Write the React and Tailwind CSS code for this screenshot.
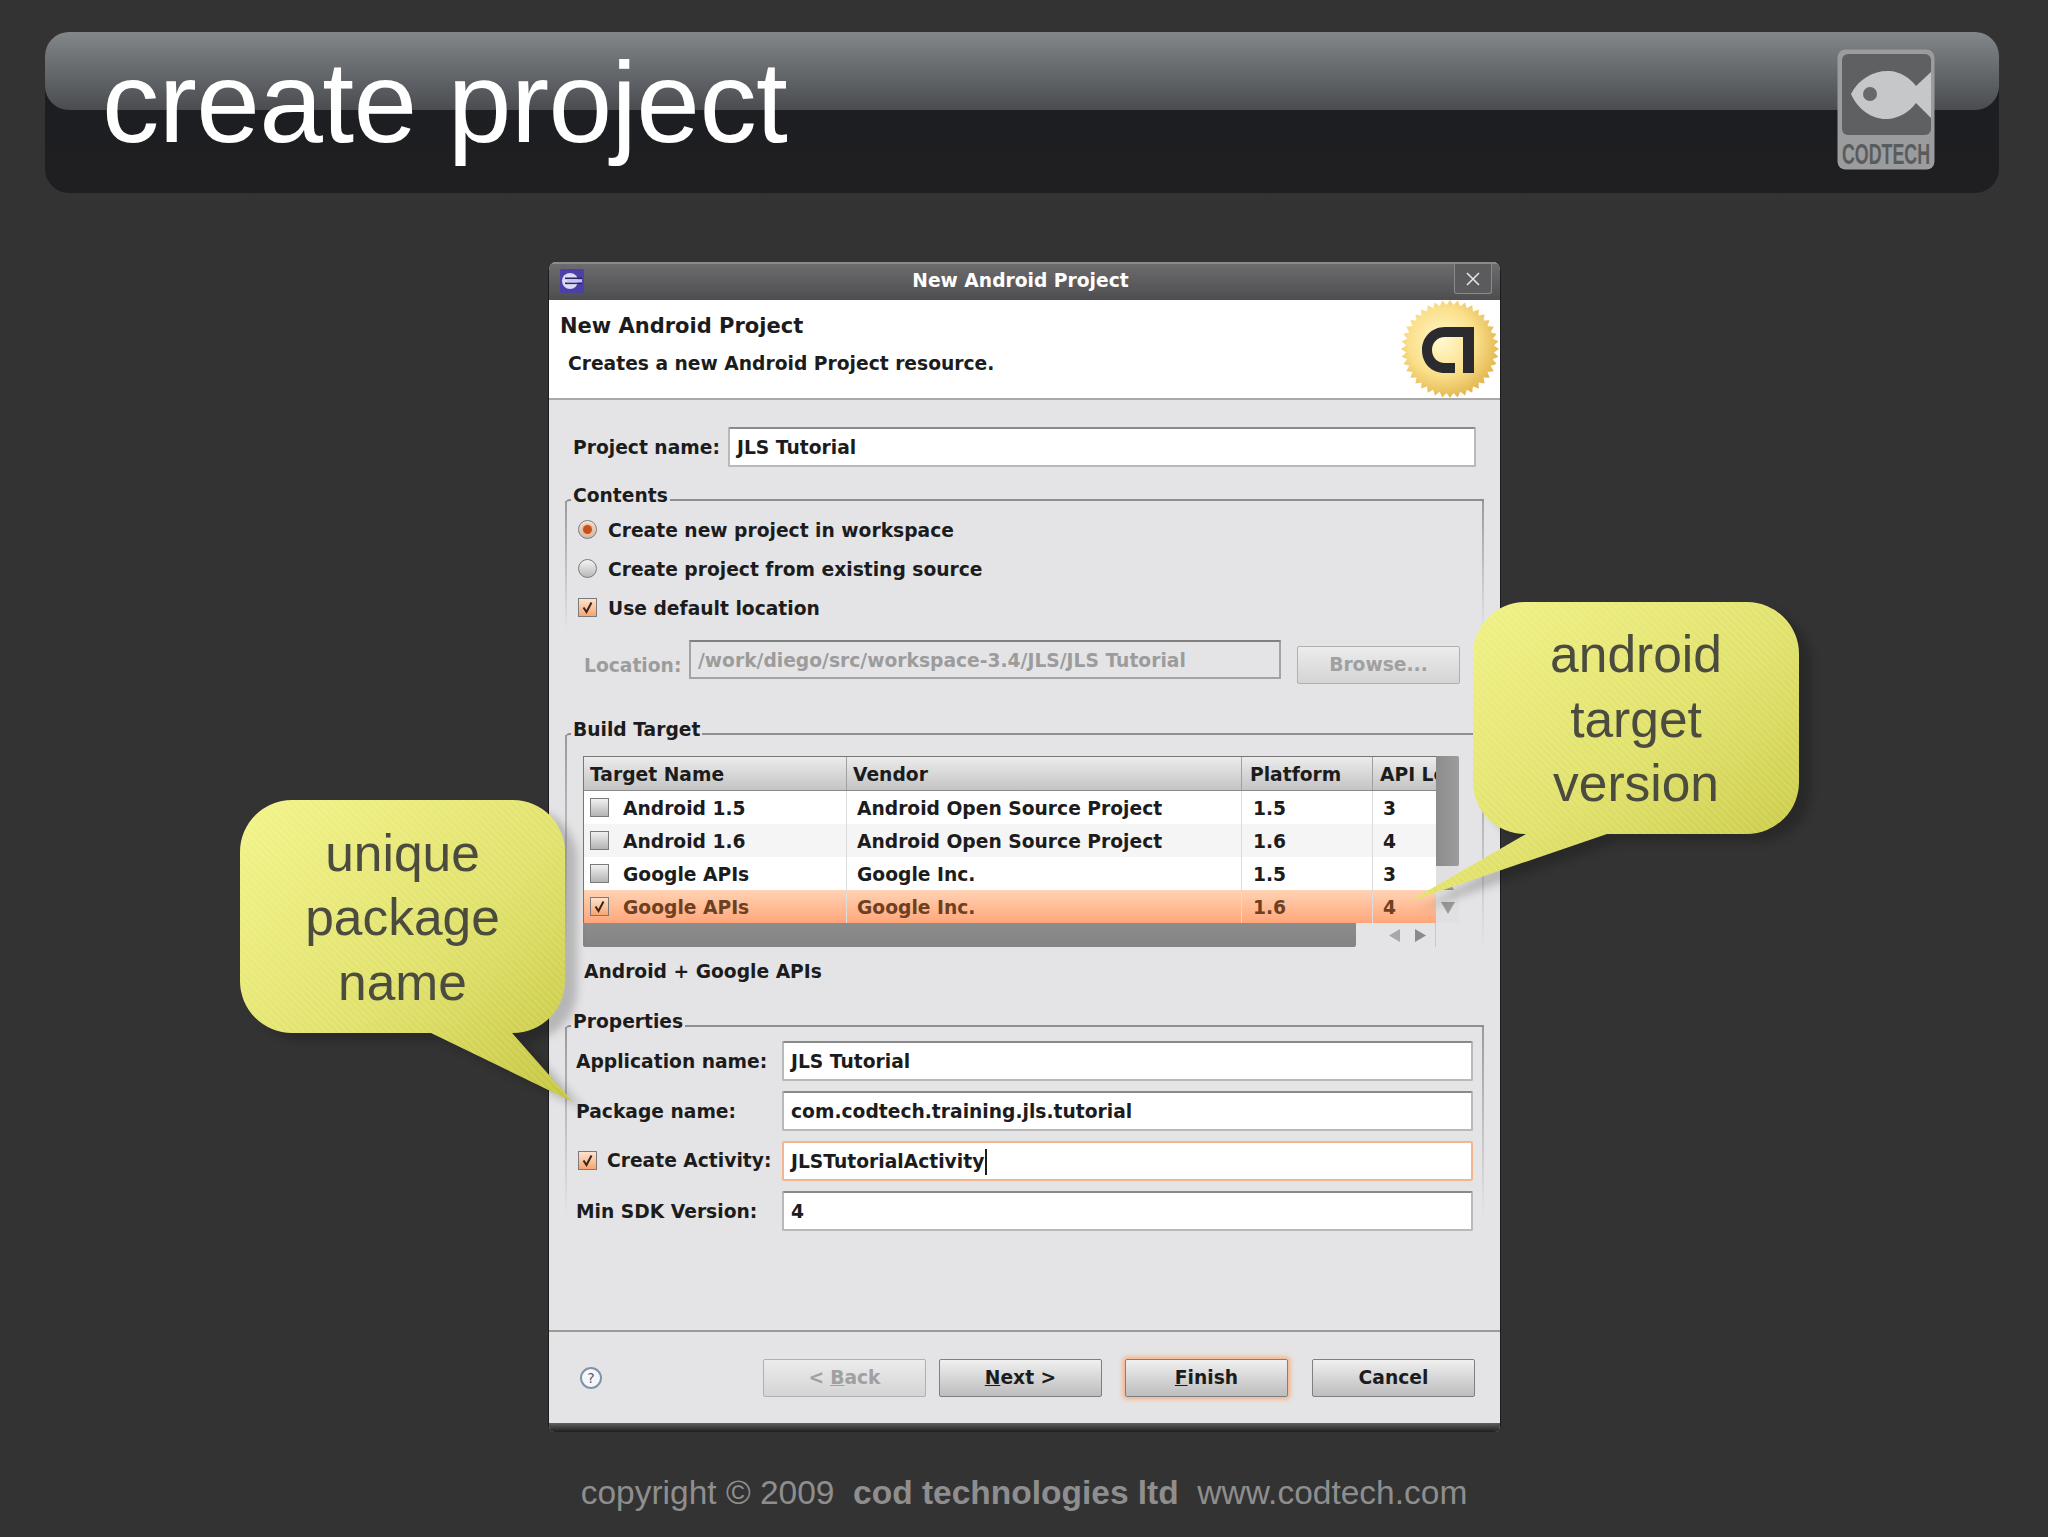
import React from 'react';

const targets = [
  { name: 'Android 1.5', vendor: 'Android Open Source Project', platform: '1.5', api: '3' },
  { name: 'Android 1.6', vendor: 'Android Open Source Project', platform: '1.6', api: '4', alt: true },
  { name: 'Google APIs', vendor: 'Google Inc.', platform: '1.5', api: '3' },
  { name: 'Google APIs', vendor: 'Google Inc.', platform: '1.6', api: '4', selected: true },
];

const sealPoints = Array.from({ length: 80 }, (_, i) => {
  const r = i % 2 === 0 ? 49 : 44;
  const a = (i / 80) * Math.PI * 2;
  return `${(49 + r * Math.cos(a)).toFixed(1)},${(49 + r * Math.sin(a)).toFixed(1)}`;
}).join(' ');

const Checkbox = ({ checked }) => (
  <span className={`flex h-[19px] w-[19px] shrink-0 items-center justify-center border border-[#7a7a7a] ${checked ? 'bg-gradient-to-b from-[#fde3cf] to-[#f6a56f]' : 'bg-gradient-to-b from-[#f1f1f1] to-[#b4b4b4]'}`}>
    {checked && (
      <svg width="13" height="13" viewBox="0 0 13 13" fill="none">
        <path d="M2.5 6.5 L5.5 11 L10.5 1.5" stroke="#3a2415" strokeWidth="2" />
      </svg>
    )}
  </span>
);

const Radio = ({ checked }) => (
  <span className="flex h-[19px] w-[19px] shrink-0 items-center justify-center rounded-full border border-[#7a7a7a] bg-gradient-to-b from-[#f4f4f4] to-[#b9b9b9]">
    {checked && <span className="h-[9px] w-[9px] rounded-full bg-[#c4521c] shadow-[0_0_3px_2px_#f8b98c]" />}
  </span>
);

const Field = ({ value, className = '', focused, disabled }) => (
  <div className={`flex items-center border-2 pl-[7px] ${focused ? 'rounded-[2px] border-[#f3b58e] bg-white pt-[2px]' : disabled ? 'border-[#a3a3a3] border-t-[#808080] bg-[#e4e4e6] pt-[4px] text-[#9c9c9c]' : 'rounded-[2px] border-[#b9b9b9] border-t-[#8a8a8a] bg-white pt-[2px]'} ${className}`}>
    {value}
    {focused && <span className="ml-px h-[26px] w-[2px] bg-[#1c1c1c]" />}
  </div>
);

const GroupBox = ({ title, className = '', children, lines = 'h-[130px]' }) => (
  <div className={`relative ml-[16px] w-[919px] rounded-tl-[5px] border-t-2 border-[#8e8e8e] ${className}`}>
    <span className={`absolute left-0 top-0 w-[2px] bg-gradient-to-b from-[#9a9a9a] to-transparent ${lines}`} />
    <span className={`absolute right-0 top-0 w-[2px] bg-gradient-to-b from-[#9a9a9a] to-transparent ${lines}`} />
    <span className="absolute left-[6px] top-[-17px] bg-[#e4e4e6] pl-[2px] pr-[2px] leading-[24px]">{title}</span>
    {children}
  </div>
);

const Button = ({ children, className = '', disabled, glow }) => (
  <div className={`flex h-[38px] w-[163px] items-center justify-center rounded-[2px] border bg-gradient-to-b ${disabled ? 'border-[#b0b0b0] from-[#ececec] to-[#d4d4d4] text-[#a0a0a0]' : 'border-[#7f7f7f] from-[#f0f0f0] to-[#bdbdbd]'} ${glow ? 'shadow-[0_0_5px_2px_#f6ae7e]' : ''} ${className}`}>
    {children}
  </div>
);

const BuildTable = () => (
  <div className="ml-[18px] w-[876px]">
    <div className="flex h-[167px]">
      <div className="w-[853px] border-l border-t border-[#777] border-b">
        <div className="grid h-[34px] grid-cols-[263px_395px_131px_63px] border-b border-[#8a8a8a] bg-gradient-to-b from-[#ececec] to-[#c4c4c4]">
          <div className="flex items-center border-r border-[#a0a0a0] pl-[6px] pt-[4px]">Target Name</div>
          <div className="flex items-center border-r border-[#a0a0a0] pl-[6px] pt-[4px]">Vendor</div>
          <div className="flex items-center border-r border-[#a0a0a0] pl-[8px] pt-[4px]">Platform</div>
          <div className="flex items-center overflow-hidden whitespace-nowrap pl-[7px] pt-[4px]">API Level</div>
        </div>
        {targets.map((t, i) => (
          <div
            key={i}
            className={`grid h-[33px] grid-cols-[263px_395px_131px_63px] ${t.selected ? 'bg-gradient-to-b from-[#ffd3b4] to-[#ffa67a] text-[#6e4022]' : t.alt ? 'bg-[#f5f5f5]' : 'bg-white'}`}
          >
            <div className="flex items-center gap-[14px] border-r border-[#dcdcdc] pl-[6px]">
              <Checkbox checked={t.selected} />
              <span className="pt-[3px]">{t.name}</span>
            </div>
            <div className="flex items-center border-r border-[#dcdcdc] pl-[10px] pt-[3px]">{t.vendor}</div>
            <div className="flex items-center border-r border-[#dcdcdc] pl-[11px] pt-[3px]">{t.platform}</div>
            <div className="flex items-center pl-[10px] pt-[3px]">{t.api}</div>
          </div>
        ))}
      </div>
      <div className="flex w-[23px] flex-col items-center bg-[#e0e0e2]">
        <div className="h-[110px] w-full rounded-r-[2px] bg-gradient-to-r from-[#8c8c8c] to-[#9c9c9c]" />
        <svg className="mt-[14px]" width="12" height="10" viewBox="0 0 12 10"><path d="M6 0 L12 10 H0 Z" fill="#9a9a9a" /></svg>
        <svg className="mt-[12px]" width="14" height="12" viewBox="0 0 14 12"><path d="M7 12 L14 0 H0 Z" fill="#9a9a9a" /></svg>
      </div>
    </div>
    <div className="flex h-[24px] w-[853px]">
      <div className="w-[773px] rounded-b-[2px] bg-gradient-to-b from-[#8c8c8c] to-[#848484]" />
      <div className="flex flex-1 items-center justify-end gap-[15px] border-r border-[#c8c8c8] pr-[9px]">
        <svg width="11" height="13" viewBox="0 0 11 13"><path d="M0 6.5 L11 0 V13 Z" fill="#a8a8a8" /></svg>
        <svg width="11" height="13" viewBox="0 0 11 13"><path d="M11 6.5 L0 0 V13 Z" fill="#8a8a8a" /></svg>
      </div>
    </div>
  </div>
);

const CodtechLogo = () => (
  <svg className="relative z-10 mr-[49px] mt-[-5px]" width="125" height="140" viewBox="0 0 125 140">
    <rect x="12.5" y="9.5" width="97" height="120" rx="8" fill="#9b9c9d" />
    <rect x="17" y="14" width="89" height="81" rx="6" fill="#5f6062" />
    <path d="M26 54 C34 38 50 30 65 31 C76 32 85 38 91 46 L106 32 V78 L91 63 C84 72 75 78 63 79 C48 80 33 70 26 54 Z" fill="#c6c7c8" />
    <circle cx="45" cy="54" r="7" fill="#68696b" />
    <text transform="translate(61 124) scale(0.615 1)" textAnchor="middle" fontFamily="'Liberation Sans', sans-serif" fontWeight="700" fontSize="29" fill="#5a5b5c">CODTECH</text>
  </svg>
);

const Seal = () => (
  <svg className="mr-px" width="98" height="98" viewBox="0 0 98 98">
    <defs>
      <radialGradient id="sealFill" cx="0.42" cy="0.42" r="0.62">
        <stop offset="0" stopColor="#fff8cf" />
        <stop offset="0.55" stopColor="#fbe08b" />
        <stop offset="1" stopColor="#dfb24a" />
      </radialGradient>
    </defs>
    <polygon points={sealPoints} fill="url(#sealFill)" />
    <path d="M73 27 H44 C30 27 21 38 21 50 C21 63 30 73 44 73 H54 V63 H44 C36 63 31 57 31 50 C31 43 36 37 44 37 H62 V73 H73 Z" fill="#2b2b2f" />
  </svg>
);

const EclipseIcon = () => (
  <svg className="ml-[11px] shrink-0" width="24" height="24" viewBox="0 0 24 24">
    <rect width="24" height="24" rx="1.5" fill="#4b40a8" />
    <circle cx="10" cy="12" r="8" fill="#dcd9f4" />
    <rect x="5" y="8.5" width="17" height="1.6" fill="#2a2460" />
    <rect x="5" y="13.5" width="17" height="1.6" fill="#2a2460" />
    <rect x="7" y="10.2" width="15" height="3.2" fill="#c8c4ee" />
  </svg>
);

const Callout = ({ id, path, className, textClass, lines }) => (
  <div className={`absolute ${className}`}>
    <svg className="h-full w-full overflow-visible drop-shadow-[12px_8px_4px_rgba(0,0,0,0.2)]">
      <defs>
        <linearGradient id={`${id}-fill`} x1="0" y1="0" x2="1" y2="1">
          <stop offset="0" stopColor="#f3f48a" />
          <stop offset="0.55" stopColor="#e0e16a" />
          <stop offset="1" stopColor="#c4c53e" />
        </linearGradient>
        <pattern id={`${id}-stripes`} width="5" height="5" patternUnits="userSpaceOnUse" patternTransform="rotate(45)">
          <rect width="5" height="2" fill="#ffffff" fillOpacity="0.1" />
        </pattern>
      </defs>
      <path d={path} fill={`url(#${id}-fill)`} />
      <path d={path} fill={`url(#${id}-stripes)`} />
    </svg>
    <div className={`absolute flex flex-col items-center justify-center text-[51.5px] leading-[64.5px] text-[#4b4b40] ${textClass}`}>
      {lines.map((l) => (
        <span key={l}>{l}</span>
      ))}
    </div>
  </div>
);

export default function App() {
  return (
    <div className="relative h-[1537px] w-[2048px] overflow-hidden bg-[#333334] pt-[32px] font-['Liberation_Sans',sans-serif]">
      {/* slide header */}
      <div className="relative ml-[45px] flex h-[161px] w-[1954px] items-start justify-between rounded-[24px] bg-gradient-to-b from-[#1b1d20] to-[#1f1f22] pl-[57px] pt-[13px]">
        <div className="absolute left-0 top-0 h-[78px] w-full rounded-[24px] bg-gradient-to-b from-[#82878a] to-[#4a4c50]" />
        <h1 className="relative z-10 text-[114.5px] leading-none tracking-[-0.6px] text-white">create project</h1>
        <CodtechLogo />
      </div>

      {/* dialog */}
      <div className="ml-[548px] mt-[69px] flex h-[1170px] w-[953px] flex-col overflow-hidden rounded-t-[8px] rounded-b-[6px] border-x border-[#1c1c1c] bg-[#e4e4e6] font-['DejaVu_Sans',sans-serif] text-[18.7px] font-bold text-[#1c1c1c]">
        <div className="flex h-[38px] shrink-0 items-center border-t-2 border-[#8b8b8b] bg-gradient-to-b from-[#6c6c6e] to-[#4e4e50] pb-[2px] text-white">
          <EclipseIcon />
          <div className="flex-1 pl-[3px] text-center">New Android Project</div>
          <div className="mr-[8px] flex h-[30px] w-[38px] items-center justify-center self-start rounded-b-[3px] border border-t-0 border-[#8a8a8a] bg-[#5b5b5d]">
            <svg width="16" height="16" viewBox="0 0 16 16" stroke="#e8e8e8" strokeWidth="1.5"><path d="M2 2 L14 14 M14 2 L2 14" /></svg>
          </div>
        </div>

        <div className="flex h-[100px] shrink-0 items-center justify-between border-b-2 border-[#a9a9a9] bg-white">
          <div className="pb-[11px] pl-[11px]">
            <div className="text-[21px] leading-[28px]">New Android Project</div>
            <div className="mt-[12px] pl-[8px] leading-[24px]">Creates a new Android Project resource.</div>
          </div>
          <Seal />
        </div>

        <div className="mt-[27px] flex h-[40px] shrink-0 items-center pl-[24px]">
          <span className="w-[155px] pt-[2px]">Project name:</span>
          <Field value="JLS Tutorial" className="h-[40px] w-[748px]" />
        </div>

        <GroupBox title="Contents" className="mt-[32px] h-[234px] shrink-0">
          <div className="pl-[13px] pt-[9px]">
            <div className="flex h-[39px] items-center gap-[11px]"><Radio checked /><span className="pt-[3px]">Create new project in workspace</span></div>
            <div className="flex h-[39px] items-center gap-[11px]"><Radio /><span className="pt-[3px]">Create project from existing source</span></div>
            <div className="flex h-[39px] items-center gap-[11px]"><Checkbox checked /><span className="pt-[3px]">Use default location</span></div>
            <div className="mt-[13px] flex items-start text-[#9c9c9c]">
              <span className="ml-[6px] mt-[14px] w-[105px] leading-[24px]">Location:</span>
              <Field value="/work/diego/src/workspace-3.4/JLS/JLS Tutorial" disabled className="h-[39px] w-[592px]" />
              <Button disabled className="ml-[16px] mt-[6px] h-[38px] w-[162px]">Browse...</Button>
            </div>
          </div>
        </GroupBox>

        <GroupBox title="Build Target" className="h-[292px] shrink-0" lines="h-[215px]">
          <div className="pt-[21px]">
            <BuildTable />
            <div className="ml-[19px] mt-[13px] leading-[24px]">Android + Google APIs</div>
          </div>
        </GroupBox>

        <GroupBox title="Properties" className="shrink-0" lines="h-[190px]">
          <div className="flex flex-col gap-[10px] pl-[11px] pt-[14px]">
            <div className="flex h-[40px] items-center">
              <span className="w-[206px] pt-[2px]">Application name:</span>
              <Field value="JLS Tutorial" className="h-[40px] w-[691px]" />
            </div>
            <div className="flex h-[40px] items-center">
              <span className="w-[206px] pt-[2px]">Package name:</span>
              <Field value="com.codtech.training.jls.tutorial" className="h-[40px] w-[691px]" />
            </div>
            <div className="flex h-[40px] items-center">
              <span className="flex w-[206px] items-center gap-[10px] pl-[2px]"><Checkbox checked />Create Activity:</span>
              <Field value="JLSTutorialActivity" focused className="h-[40px] w-[691px]" />
            </div>
            <div className="flex h-[40px] items-center">
              <span className="w-[206px] pt-[2px]">Min SDK Version:</span>
              <Field value="4" className="h-[40px] w-[691px]" />
            </div>
          </div>
        </GroupBox>

        <div className="mt-auto h-[93px] shrink-0 border-t-2 border-[#9a9a9a] pt-[27px]">
          <div className="flex items-center pl-[31px] pr-[25px]">
            <span className="flex h-[22px] w-[22px] items-center justify-center rounded-full border-2 border-[#7f93ad] bg-[#f6f6f8] text-[14px] font-normal text-[#4d5f78]">?</span>
            <div className="ml-auto flex">
              <Button disabled>&lt; <span className="ml-[6px] underline">B</span>ack</Button>
              <Button className="ml-[13px]"><span className="underline">N</span>ext &gt;</Button>
              <Button glow className="ml-[23px]"><span className="underline">F</span>inish</Button>
              <Button className="ml-[24px]">Cancel</Button>
            </div>
          </div>
        </div>
        <div className="h-[9px] shrink-0 bg-gradient-to-b from-[#606062] to-[#1f1f20]" />
      </div>

      {/* footer */}
      <div className="mt-[41px] flex justify-center whitespace-pre text-[33.5px] leading-[40px] text-[#8e8e8e]">
        copyright © 2009  <b>cod technologies ltd</b>  www.codtech.com
      </div>

      <Callout
        id="left"
        className="left-[232px] top-[795px] h-[320px] w-[360px]"
        textClass="left-[8px] top-[6px] h-[233px] w-[325px]"
        path="M60 5 H281 A52 52 0 0 1 333 57 V186 A52 52 0 0 1 281 238 H280 L341 307 L199 238 H60 A52 52 0 0 1 8 186 V57 A52 52 0 0 1 60 5 Z"
        lines={['unique', 'package', 'name']}
      />
      <Callout
        id="right"
        className="left-[1400px] top-[595px] h-[325px] w-[410px]"
        textClass="left-[73px] top-[8px] h-[232px] w-[326px]"
        path="M125 7 H347 A52 52 0 0 1 399 59 V187 A52 52 0 0 1 347 239 H207 L8 307 L126 239 H125 A52 52 0 0 1 73 187 V59 A52 52 0 0 1 125 7 Z"
        lines={['android', 'target', 'version']}
      />
    </div>
  );
}
